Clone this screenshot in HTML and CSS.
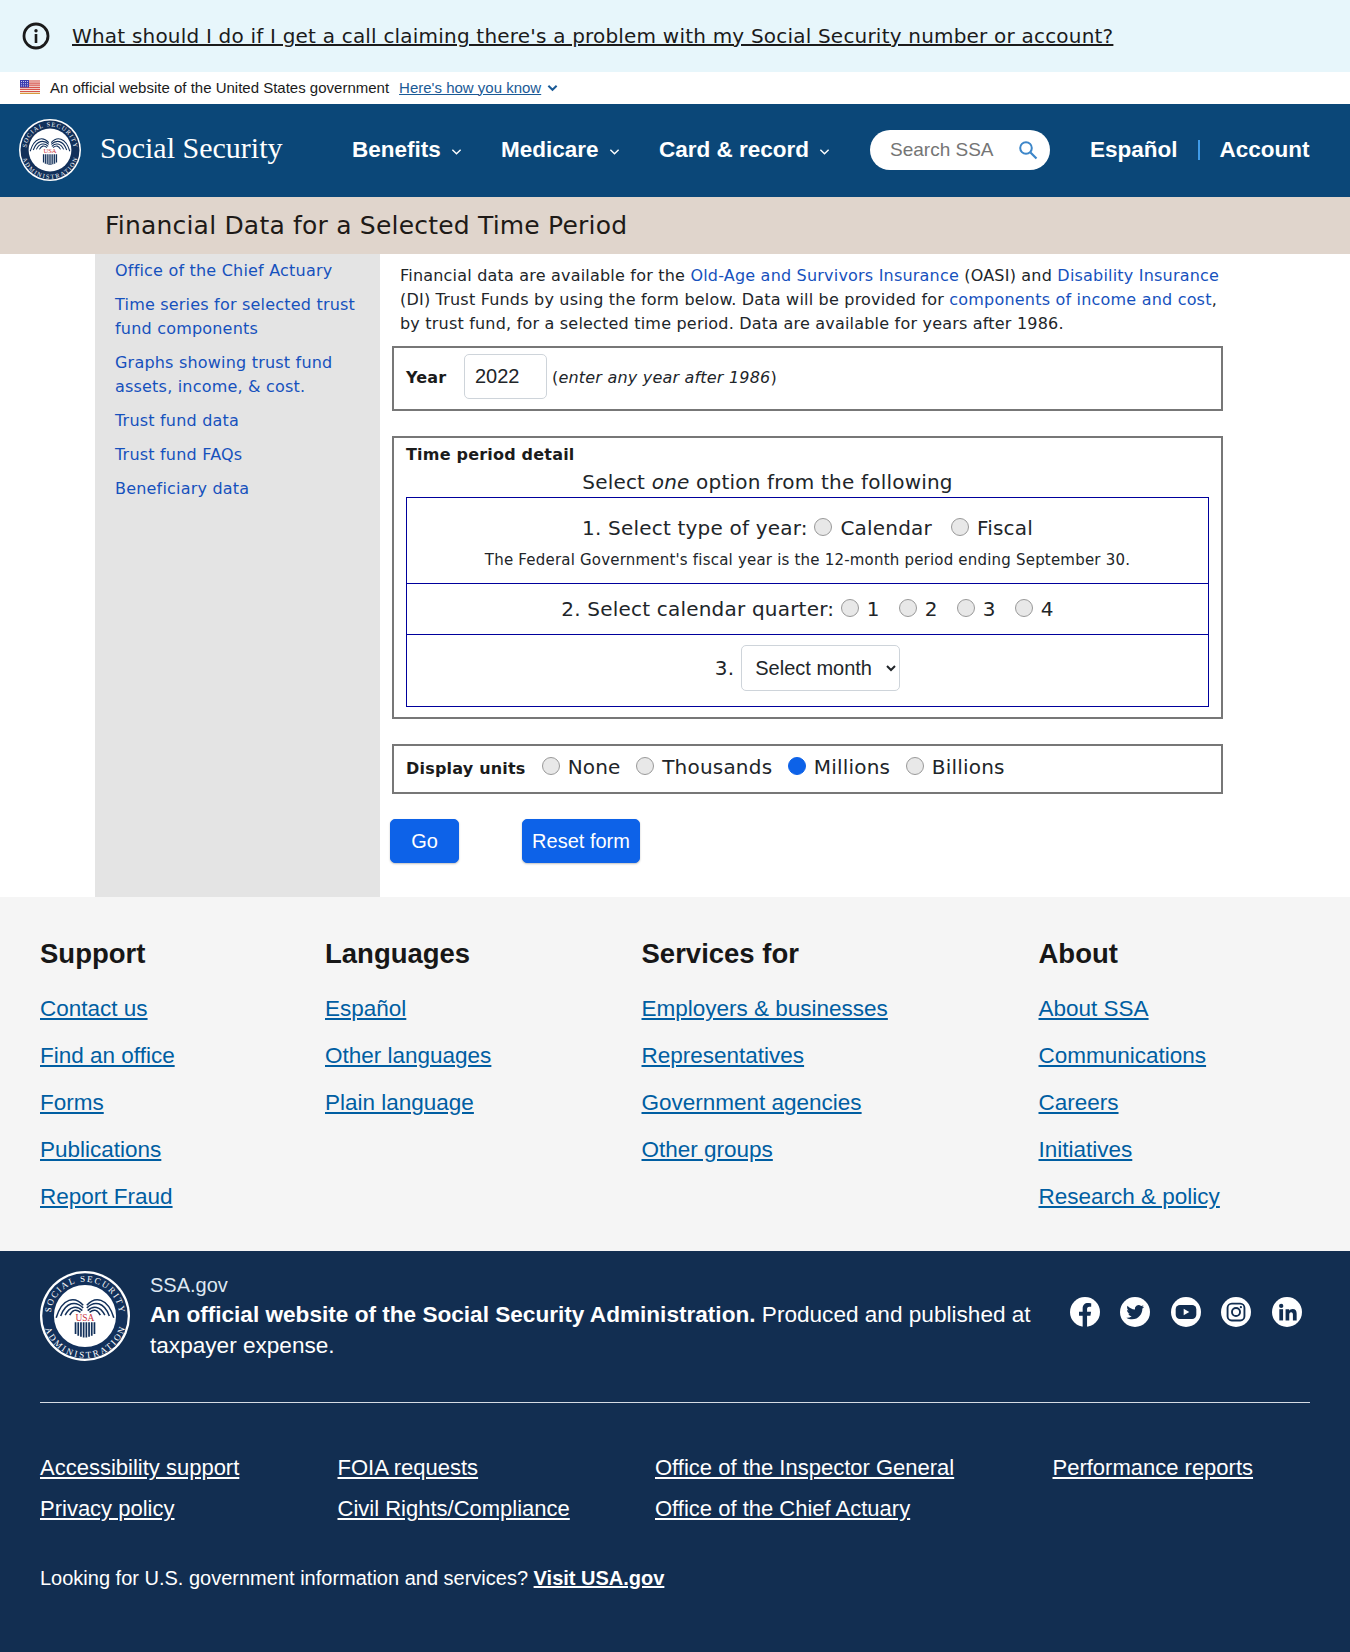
FILE: index.html
```html
<!DOCTYPE html>
<html lang="en">
<head>
<meta charset="utf-8">
<title>Financial Data for a Selected Time Period</title>
<link rel="stylesheet" href="styles.css">
</head>
<body>
<svg class="defs" width="0" height="0" aria-hidden="true">
  <defs>
    <path id="arcTop" d="M12 50a38 38 0 0 1 76 0"/>
    <path id="arcBot" d="M3.500 50a46.500 46.500 0 0 0 93 0"/>
    <symbol id="seal" viewBox="0 0 100 100">
      <circle cx="50" cy="50" r="50" fill="#fff"/>
      <circle cx="50" cy="50" r="47.500" fill="#12305a"/>
      <circle cx="50" cy="50" r="34.500" fill="#fff"/>
      <text class="seal-text"><textPath href="#arcTop" startOffset="50%" text-anchor="middle" textLength="112">SOCIAL SECURITY</textPath></text>
      <text class="seal-text"><textPath href="#arcBot" startOffset="50%" text-anchor="middle" textLength="118">ADMINISTRATION</textPath></text>
      <path d="M48 38C39 28 25 29 18 52M48 41C40 33 29 34 23 50M47 44C41 38 33 39 28 49M45 46C40 42 36 43 33 49M52 38C61 28 75 29 82 52M52 41C60 33 71 34 77 50M53 44C59 38 67 39 72 49M55 46C60 42 64 43 67 49" fill="none" stroke="#12305a" stroke-width="1.700"/>
      <text class="seal-usa" x="50" y="55" text-anchor="middle">USA</text>
      <path d="M39.500 57v13M42.500 57v15M45.500 57v16M48.500 57v17M51.500 57v17M54.500 57v16M57.500 57v15M60.500 57v13" stroke="#12305a" stroke-width="1.900"/>
    </symbol>
  </defs>
</svg>

<div class="alert">
  <svg class="alert-icon" viewBox="0 0 28 28" width="28" height="28" aria-hidden="true">
    <circle cx="14" cy="14" r="12" fill="none" stroke="#1b1b1b" stroke-width="2.800"/>
    <circle cx="14" cy="8.800" r="1.700" fill="#1b1b1b"/>
    <rect x="12.700" y="12" width="2.600" height="9" fill="#1b1b1b"/>
  </svg>
  <a class="alert-link" href="#">What should I do if I get a call claiming there's a problem with my Social Security number or account?</a>
</div>

<div class="gov-banner">
  <svg class="flag" viewBox="0 0 20 14" width="20" height="14" aria-hidden="true">
    <rect width="20" height="14" fill="#f6eeea"/>
    <path d="M0 1h20M0 3.100h20M0 5.200h20M0 7.300h20M0 9.400h20M0 11.500h20" stroke="#d8534b" stroke-width="1.200"/>
    <path d="M0 13.400h20" stroke="#d99a3c" stroke-width="1.200"/>
    <rect width="9" height="7.400" fill="#3d3db0"/>
    <path d="M1 1.500h7M1 3.700h7M1 5.900h7" stroke="#d8d8f4" stroke-width=".9" stroke-dasharray="1 1"/>
  </svg>
  <span class="gov-text">An official website of the United States government</span>
  <a class="gov-link" href="#">Here's how you know</a>
  <svg class="gov-chevron" viewBox="0 0 12 8" width="11" height="8" aria-hidden="true"><path d="M1.500 1.500 6 6l4.500-4.500" fill="none" stroke="#1a5a96" stroke-width="2.200"/></svg>
</div>

<header class="site-header">
  <svg class="header-seal" width="62" height="62" aria-hidden="true"><use href="#seal"/></svg>
  <a class="brand" href="#">Social Security</a>
  <nav class="main-nav">
    <a class="nav-item nav-benefits" href="#">Benefits<svg class="nav-chevron" viewBox="0 0 12 8" width="11" height="8" aria-hidden="true"><path d="M1.500 1.500 6 6l4.500-4.500" fill="none" stroke="#fff" stroke-width="1.500"/></svg></a>
    <a class="nav-item nav-medicare" href="#">Medicare<svg class="nav-chevron" viewBox="0 0 12 8" width="11" height="8" aria-hidden="true"><path d="M1.500 1.500 6 6l4.500-4.500" fill="none" stroke="#fff" stroke-width="1.500"/></svg></a>
    <a class="nav-item nav-card" href="#">Card &amp; record<svg class="nav-chevron" viewBox="0 0 12 8" width="11" height="8" aria-hidden="true"><path d="M1.500 1.500 6 6l4.500-4.500" fill="none" stroke="#fff" stroke-width="1.500"/></svg></a>
  </nav>
  <div class="search">
    <span class="search-text">Search SSA</span>
    <svg class="search-icon" viewBox="0 0 20 20" width="20" height="20" aria-hidden="true"><circle cx="8" cy="8" r="5.800" fill="none" stroke="#3c86c9" stroke-width="2"/><path d="m12.500 12.500 6 6" stroke="#3c86c9" stroke-width="2.200"/></svg>
  </div>
  <a class="nav-item nav-es" href="#">Español</a>
  <span class="nav-sep"></span>
  <a class="nav-item" href="#">Account</a>
</header>

<div class="title-bar"><h1 class="page-title">Financial Data for a Selected Time Period</h1></div>

<div class="content">
  <aside class="sidebar">
    <a class="side-link" href="#">Office of the Chief Actuary</a>
    <a class="side-link" href="#">Time series for selected trust fund components</a>
    <a class="side-link" href="#">Graphs showing trust fund assets, income, &amp; cost.</a>
    <a class="side-link" href="#">Trust fund data</a>
    <a class="side-link" href="#">Trust fund FAQs</a>
    <a class="side-link" href="#">Beneficiary data</a>
  </aside>
  <main class="main">
    <p class="intro">Financial data are available for the <a href="#">Old-Age and Survivors Insurance</a> (OASI) and <a href="#">Disability Insurance</a> (DI) Trust Funds by using the form below. Data will be provided for <a href="#">components of income and cost</a>, by trust fund, for a selected time period. Data are available for years after 1986.</p>
    <form class="form">
      <div class="box box-year">
        <b class="box-label year-label">Year</b>
        <input class="year-input" type="text" value="2022" aria-label="Year">
        <span class="year-hint">(<i>enter any year after 1986</i>)</span>
      </div>
      <div class="box box-period">
        <b class="box-label">Time period detail</b>
        <div class="select-one">Select <i>one</i> option from the following</div>
        <div class="options">
          <div class="opt opt-year">
            <div class="opt-line">1. Select type of year: <label class="radio r1"><input type="radio" name="t"> Calendar</label><label class="radio r1"><input type="radio" name="t"> Fiscal</label></div>
            <div class="opt-note">The Federal Government's fiscal year is the 12-month period ending September 30.</div>
          </div>
          <div class="opt opt-quarter">
            <div class="opt-line">2. Select calendar quarter: <label class="radio r2"><input type="radio" name="q"> 1</label><label class="radio r2"><input type="radio" name="q"> 2</label><label class="radio r2"><input type="radio" name="q"> 3</label><label class="radio r2"><input type="radio" name="q"> 4</label></div>
          </div>
          <div class="opt opt-month">
            <span class="opt-line">3.</span>
            <select class="month" aria-label="Month"><option>Select month</option></select>
          </div>
        </div>
      </div>
      <div class="box box-units">
        <b class="box-label units-label">Display units</b>
        <label class="radio"><input type="radio" name="u"> None</label>
        <label class="radio"><input type="radio" name="u"> Thousands</label>
        <label class="radio"><input type="radio" name="u" checked> Millions</label>
        <label class="radio"><input type="radio" name="u"> Billions</label>
      </div>
      <div class="buttons">
        <button class="btn btn-go" type="button">Go</button>
        <button class="btn btn-reset" type="button">Reset form</button>
      </div>
    </form>
  </main>
</div>

<section class="footer-links">
  <div class="flink-col">
    <h2 class="flink-head">Support</h2>
    <a href="#">Contact us</a><a href="#">Find an office</a><a href="#">Forms</a><a href="#">Publications</a><a href="#">Report Fraud</a>
  </div>
  <div class="flink-col">
    <h2 class="flink-head">Languages</h2>
    <a href="#">Español</a><a href="#">Other languages</a><a href="#">Plain language</a>
  </div>
  <div class="flink-col">
    <h2 class="flink-head">Services for</h2>
    <a href="#">Employers &amp; businesses</a><a href="#">Representatives</a><a href="#">Government agencies</a><a href="#">Other groups</a>
  </div>
  <div class="flink-col">
    <h2 class="flink-head">About</h2>
    <a href="#">About SSA</a><a href="#">Communications</a><a href="#">Careers</a><a href="#">Initiatives</a><a href="#">Research &amp; policy</a>
  </div>
</section>

<footer class="footer">
  <div class="footer-top">
    <svg class="footer-seal" width="90" height="90" aria-hidden="true"><use href="#seal"/></svg>
    <div class="footer-id">
      <div class="footer-domain">SSA.gov</div>
      <div class="footer-official"><b>An official website of the Social Security Administration.</b> Produced and published at taxpayer expense.</div>
    </div>
    <div class="social">
      <svg viewBox="0 0 32 32" width="30" height="30" aria-label="Facebook"><circle cx="16" cy="16" r="16" fill="#fff"/><path d="M18.200 32V20h3.600l.7-4.400h-4.300v-2.700c0-1.300.6-2.400 2.500-2.400h1.900V6.700s-1.700-.3-3.400-.3c-3.500 0-5.700 2.100-5.700 5.900v3.300H9.600V20h3.900v12z" fill="#122e51"/></svg>
      <svg viewBox="0 0 32 32" width="30" height="30" aria-label="Twitter"><circle cx="16" cy="16" r="16" fill="#fff"/><path d="M25.500 10.300c-.7.300-1.400.5-2.200.6.800-.5 1.400-1.200 1.700-2.100-.8.400-1.600.8-2.500.9a3.900 3.900 0 0 0-6.600 3.500c-3.200-.2-6-1.700-7.900-4-.9 1.800-.4 3.900 1.200 5.200-.6 0-1.200-.2-1.700-.5 0 1.900 1.300 3.500 3.100 3.900-.6.100-1.200.2-1.700 0 .5 1.500 1.900 2.600 3.600 2.700a7.800 7.800 0 0 1-5.700 1.600c1.700 1.100 3.800 1.700 6 1.700 7.200 0 11.300-6.100 11-11.600.9-.5 1.600-1.200 1.700-1.900z" fill="#122e51"/></svg>
      <svg viewBox="0 0 32 32" width="30" height="30" aria-label="YouTube"><circle cx="16" cy="16" r="16" fill="#fff"/><rect x="5" y="8.500" width="22" height="15" rx="4.500" fill="#122e51"/><path d="m13.500 12.500 6 3.500-6 3.500z" fill="#fff"/></svg>
      <svg viewBox="0 0 32 32" width="30" height="30" aria-label="Instagram"><circle cx="16" cy="16" r="16" fill="#fff"/><rect x="7" y="7" width="18" height="18" rx="4.500" fill="none" stroke="#122e51" stroke-width="2"/><circle cx="16" cy="16" r="4.300" fill="none" stroke="#122e51" stroke-width="2"/><circle cx="21.200" cy="10.800" r="1.200" fill="#122e51"/></svg>
      <svg viewBox="0 0 32 32" width="30" height="30" aria-label="LinkedIn"><circle cx="16" cy="16" r="16" fill="#fff"/><circle cx="9.800" cy="9.500" r="2.300" fill="#122e51"/><rect x="7.800" y="13" width="4" height="12" fill="#122e51"/><path d="M14.500 13h3.800v1.700c.6-1.200 2-2 3.700-2 3.200 0 4.300 2.100 4.300 5.100V25h-4v-6.200c0-1.500-.4-2.600-1.900-2.600s-2 1.100-2 2.600V25h-3.900z" fill="#122e51"/></svg>
    </div>
  </div>
  <hr class="footer-rule">
  <div class="legal">
    <a href="#">Accessibility support</a><a href="#">FOIA requests</a><a href="#">Office of the Inspector General</a><a href="#">Performance reports</a>
    <a href="#">Privacy policy</a><a href="#">Civil Rights/Compliance</a><a href="#">Office of the Chief Actuary</a>
  </div>
  <p class="visit">Looking for U.S. government information and services? <a href="#">Visit USA.gov</a></p>
</footer>
</body>
</html>
```

FILE: styles.css
```css
* { box-sizing: border-box; }
html, body { margin: 0; padding: 0; }
body { font-family: "DejaVu Sans", sans-serif; letter-spacing: .2px; color: #212529; background: #fff; width: 1350px; overflow-x: hidden; }
.defs { position: absolute; }
.seal-text { font-family: "Liberation Serif", serif; font-size: 10px; fill: #fff; letter-spacing: 0; }
.seal-usa { font-family: "Liberation Serif", serif; font-size: 10.500px; fill: #c8303a; letter-spacing: 0; }

.alert { height: 72px; background: #e7f6fb; display: flex; align-items: center; padding-left: 22px; }
.alert-icon { flex: none; }
.alert-link { margin-left: 22px; font-size: 20px; color: #1b1b1b; }

.gov-banner { height: 32px; display: flex; align-items: center; padding: 0 0 2px 20px; font-family: "Liberation Sans", sans-serif; font-size: 15px; letter-spacing: 0; color: #1b1b1b; }
.flag { flex: none; }
.gov-text { margin-left: 10px; }
.gov-link { margin-left: 10px; color: #1a5a96; }
.gov-chevron { margin-left: 6px; margin-top: 2px; }

.site-header { height: 93px; background: #0b4778; display: flex; align-items: center; padding: 0 0 2px 19px; font-family: "Liberation Sans", sans-serif; letter-spacing: 0; }
.header-seal { flex: none; }
.brand { margin-left: 19px; width: 252px; font-family: "Liberation Serif", serif; font-size: 30px; color: #fff; text-decoration: none; margin-top: -3px; }
.main-nav { display: flex; }
.nav-item { color: #fff; font-weight: 700; font-size: 22.500px; text-decoration: none; white-space: nowrap; }
.nav-benefits { width: 149px; }
.nav-medicare { width: 158px; }
.nav-card { width: 211px; }
.nav-chevron { margin-left: 10px; vertical-align: 1px; }
.search { width: 180px; height: 40px; border-radius: 20px; background: #fff; display: flex; align-items: center; justify-content: space-between; padding: 0 12px 0 20px; }
.search-text { font-size: 19px; color: #757575; }
.nav-es { margin-left: 40px; }
.nav-sep { width: 2px; height: 20px; margin: 0 20px 0 20px; background: #3f9be8; }

.title-bar { height: 57px; background: #e0d5cc; display: flex; align-items: center; padding-left: 105px; }
.page-title { margin: 0; font-size: 25px; font-weight: 400; color: #1e1a17; }

.content { display: flex; height: 643px; padding-left: 95px; }
.sidebar { width: 285px; background: #e4e4e4; padding: 5px 20px 0; display: flex; flex-direction: column; gap: 10px; }
.side-link { font-size: 16px; line-height: 24px; color: #1651bd; text-decoration: none; }
.main { width: 830px; padding: 10px 0 0 12px; }
.intro { margin: 0 0 10px 8px; font-size: 16px; line-height: 24px; width: 830px; }
.intro a { color: #1651bd; text-decoration: none; }

.box { border: 2px solid #777; display: block; }
.box-label { font-size: 16px; color: #1b1b1b; }
.box-year { height: 65px; width: 831px; display: flex; align-items: center; padding: 0 0 2px 12px; margin-bottom: 25px; }
.year-label { width: 58px; }
.year-input { width: 83px; height: 45px; margin-top: -3px; border: 1px solid #ced4da; border-radius: 5px; padding: 0 10px; font-family: "Liberation Sans", sans-serif; font-size: 20px; color: #212529; }
.year-hint { margin-left: 5px; font-size: 16px; }

.box-period { height: 283px; width: 831px; padding: 5px 12px 0; margin-bottom: 25px; line-height: 24px; }
.select-one { font-size: 20px; line-height: 28px; text-align: center; margin-top: 1px; width: 723px; }
.options { border: 1px solid #00009c; height: 210px; display: flex; flex-direction: column; margin-top: 1px; }
.opt { border-bottom: 1px solid #00009c; text-align: center; }
.opt:last-child { border-bottom: 0; flex: 1; }
.opt-year { height: 86px; padding-top: 16px; }
.opt-quarter { height: 51px; padding-top: 11px; }
.opt-month { padding-top: 10px; display: flex; justify-content: center; align-items: flex-start; }
.opt-line { font-size: 20px; line-height: 28px; }
.opt-month .opt-line { line-height: 46px; margin-right: 7px; }
.opt-note { font-size: 15px; line-height: 24px; margin-top: 6px; }
.month { width: 159px; height: 46px; border: 1px solid #ced4da; border-radius: 5px; background: #fff; padding: 0 0 0 9px; font-family: "Liberation Sans", sans-serif; font-size: 20px; color: #212529; }

.radio { font-size: 20px; margin-right: 17px; white-space: nowrap; }
.radio:last-child { margin-right: 0; }
.r1 { margin-right: 19px; }
.r2 { margin-right: 19px; }
.radio input { appearance: none; width: 18px; height: 18px; margin: 0 1.500px 0 0; border: 1px solid #999; border-radius: 50%; background: #e8e8e8; vertical-align: -1px; }
.radio input:checked { background: #0d62e8; border-color: #0d62e8; }

.box-units { height: 50px; width: 831px; display: flex; align-items: center; padding-left: 12px; margin-bottom: 25px; }
.box-units .radio { margin-top: -4px; margin-right: 15.500px; }
.units-label { margin-right: 16px; margin-top: -1px; }

.buttons { display: flex; gap: 63px; margin-left: -2px; }
.btn { height: 44px; border: 1px solid #0d62e8; border-radius: 5px; background: #0d62e8; color: #fff; font-family: "Liberation Sans", sans-serif; font-size: 20px; padding: 0; box-shadow: 0 1px 2px rgba(0,0,0,.25); }
.btn-go { width: 69px; }
.btn-reset { width: 118px; }

.footer-links { height: 354px; background: #f5f5f5; display: grid; grid-template-columns: 285px 316.500px 397px 1fr; padding: 40px 40px 0; font-family: "Liberation Sans", sans-serif; letter-spacing: 0; }
.flink-col { display: flex; flex-direction: column; align-items: flex-start; }
.flink-head { margin: 0 0 25px; font-size: 27.500px; line-height: 34px; font-weight: 700; color: #171717; }
.flink-col a { font-size: 22.500px; line-height: 26px; margin-bottom: 21px; color: #005ea2; white-space: nowrap; }

.footer { height: 401px; background: #122e51; color: #fff; padding: 20px 40px 0; font-family: "Liberation Sans", sans-serif; letter-spacing: 0; }
.footer-top { display: flex; height: 131px; }
.footer-seal { flex: none; }
.footer-id { margin-left: 20px; width: 920px; }
.footer-domain { font-size: 20px; line-height: 26px; margin-top: 1px; color: #dfe8f2; }
.footer-official { font-size: 22.600px; line-height: 31px; margin-top: 1px; }
.social { display: flex; gap: 20.400px; margin-top: 26px; height: 30px; }
.social svg { flex: none; }
.footer-rule { margin: 0; border: 0; border-top: 1px solid #d5dbe3; }
.legal { display: grid; grid-template-columns: 297.500px 317.500px 397.500px 1fr; row-gap: 15px; margin-top: 52px; }
.legal a { color: #fff; font-size: 22px; line-height: 26px; white-space: nowrap; }
.visit { margin: 43px 0 0; font-size: 20px; line-height: 26px; }
.visit a { color: #fff; font-weight: 700; }
```
